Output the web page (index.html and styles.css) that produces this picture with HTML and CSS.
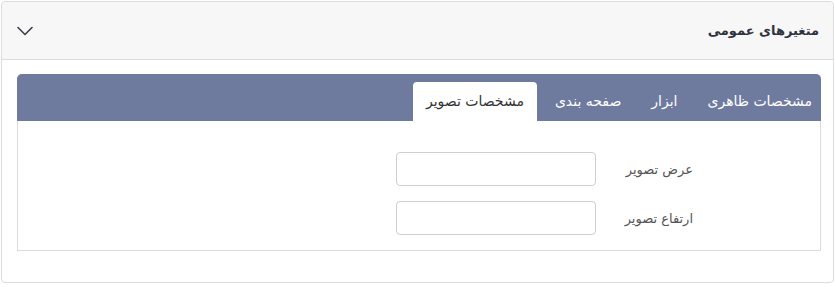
FILE: index.html
```html
<!DOCTYPE html>
<html lang="fa" dir="rtl">
<head>
  <meta charset="UTF-8">
  <meta name="viewport" content="width=device-width, initial-scale=1.0">
  <title>متغیرهای عمومی</title>
  <link rel="stylesheet" href="styles.css">
</head>
<body>

  <div class="card">
    <div class="card-header">
      <h2>متغیرهای عمومی</h2>
      <svg class="chevron" width="16" height="10" viewBox="0 0 16 10">
        <path d="M1 1.5 L8 8.5 L15 1.5" fill="none" stroke="#3b3f4a" stroke-width="1.6" stroke-linecap="round" stroke-linejoin="round"/>
      </svg>
    </div>

    <div class="card-body">
      <div class="panel">
        <ul class="tabs">
          <li class="tab">مشخصات ظاهری</li>
          <li class="tab">ابزار</li>
          <li class="tab">صفحه بندی</li>
          <li class="tab active">مشخصات تصویر</li>
        </ul>

        <div class="tab-content">
          <div class="form-row">
            <label for="imgWidth">عرض تصویر</label>
            <input type="text" id="imgWidth" />
          </div>
          <div class="form-row">
            <label for="imgHeight">ارتفاع تصویر</label>
            <input type="text" id="imgHeight" />
          </div>
        </div>
      </div>
    </div>
  </div>

</body>
</html>
```

FILE: styles.css
```css
body {
  margin: 0;
  padding: 1px 1px 0 1px;
  font-family: Tahoma, "DejaVu Sans", sans-serif;
  background-color: white;
  color: #333;
}

.card {
  width: 831px;
  border: 1px solid #dcdcdc;
  border-radius: 4px;
  background-color: white;
}

.card-header {
  display: flex;
  justify-content: space-between;
  align-items: center;
  height: 57px;
  padding: 0 14px 0 15px;
  background-color: #f7f7f7;
  border-bottom: 1px solid #dcdcdc;
  border-radius: 4px 4px 0 0;
}

.card-header h2 {
  margin: 0;
  font-size: 13px;
  font-weight: bold;
  color: #2f3340;
}

.chevron {
  display: block;
}

.card-body {
  padding: 15px 12px 31px 15px;
}

.panel {
  border: 1px solid #dcdcdc;
  border-top: none;
  border-radius: 5px 5px 0 0;
}

.tabs {
  display: flex;
  align-items: flex-end;
  list-style: none;
  margin: -1px -1px 0 -1px;
  padding: 0;
  height: 47px;
  background-color: #6e7a9e;
  border-radius: 5px 5px 0 0;
}

.tab {
  height: 39px;
  line-height: 39px;
  padding: 0 15px;
  font-size: 14px;
  color: white;
  cursor: pointer;
}

.tab:first-child {
  padding-right: 9px;
}

.tab.active {
  background-color: white;
  color: #333;
  border-radius: 4px 4px 0 0;
  padding: 0 13px;
  margin-right: 3px;
}

.tab-content {
  padding: 31px 127px 15px 0;
  display: flex;
  flex-direction: column;
  gap: 15px;
}

.form-row {
  display: flex;
  align-items: center;
}

.form-row label {
  width: 97px;
  font-size: 13px;
  color: #555;
}

.form-row input {
  width: 200px;
  height: 34px;
  box-sizing: border-box;
  border: 1px solid #cfcfcf;
  border-radius: 4px;
  padding: 0 8px;
  font-size: 13px;
  color: #333;
}
```
